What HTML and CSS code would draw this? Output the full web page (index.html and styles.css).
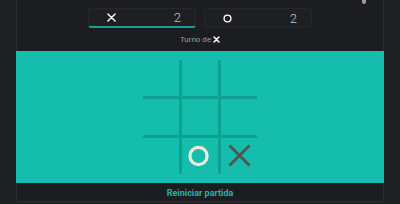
FILE: index.html
```html
<!DOCTYPE html>
<html lang="es">
<head>
    <meta charset="UTF-8">
    <meta name="viewport" content="width=device-width, initial-scale=1.0">
    <title>Tres en raya</title>
    <link rel="stylesheet" href="styles.css">
</head>
<body>
    <div class="game">
        <div class="scores">
            <div class="score active">
                <svg class="mark" width="9" height="9" viewBox="0 0 10 10"><path d="M1 1 L9 9 M9 1 L1 9" stroke="#fff" stroke-width="1.5" stroke-linecap="round"/></svg>
                <span class="points">2</span>
            </div>
            <div class="score">
                <svg class="mark" width="9" height="9" viewBox="0 0 10 10"><circle cx="5" cy="5" r="3.8" fill="none" stroke="#fff" stroke-width="1.5"/></svg>
                <span class="points">2</span>
            </div>
        </div>

        <p class="turn">Turno de <svg width="7" height="7" viewBox="0 0 10 10"><path d="M1.5 1.5 L8.5 8.5 M8.5 1.5 L1.5 8.5" stroke="#fff" stroke-width="2.2" stroke-linecap="round"/></svg></p>

        <div class="board">
            <div class="grid">
                <div class="cell"></div>
                <div class="cell"></div>
                <div class="cell"></div>
                <div class="cell"></div>
                <div class="cell"></div>
                <div class="cell"></div>
                <div class="cell"></div>
                <div class="cell">
                    <svg width="24" height="24" viewBox="0 0 24 24"><circle cx="10.5" cy="12" r="8.6" fill="none" stroke="#f2ebd3" stroke-width="3.2"/></svg>
                </div>
                <div class="cell">
                    <svg width="24" height="24" viewBox="0 0 24 24"><path d="M2.5 1.5 L22.5 21.5 M22.5 1.5 L2.5 21.5" stroke="#545454" stroke-width="3"/></svg>
                </div>
            </div>
        </div>

        <button class="restart">Reiniciar partida</button>
    </div>

    <div class="pointer"></div>
</body>
</html>
```

FILE: styles.css
```css
body {
    margin: 0;
    height: 204px;
    overflow: hidden;
    background: #202125;
    font-family: Roboto, "Liberation Sans", sans-serif;
    color: #c8c8c8;
}
.game {
    margin: 0 16px;
    height: 202px;
    background: #1c1d21;
    border-left: 1px solid #2b2c30;
    border-right: 1px solid #2b2c30;
    border-bottom: 1px solid #2b2c30;
    box-sizing: border-box;
    display: flex;
    flex-direction: column;
}
.scores {
    display: flex;
    justify-content: center;
    gap: 8px;
    padding-top: 8px;
    flex-shrink: 0;
}
.score {
    width: 108px;
    height: 20px;
    box-sizing: border-box;
    display: flex;
    align-items: center;
    justify-content: space-between;
    padding: 0 14px 0 18px;
    background: #1e1f23;
    border: 1px solid #26272b;
    border-radius: 3px;
}
.score.active {
    border-bottom: 2px solid #1c9f90;
}
.points {
    font-size: 13px;
    font-weight: 300;
    color: #c4c4c4;
}
.turn {
    margin: 0;
    height: 23px;
    flex-shrink: 0;
    display: flex;
    align-items: center;
    justify-content: center;
    gap: 2px;
    font-size: 8px;
    color: #9a9a9a;
}
.board {
    background: #14bdac;
    height: 132px;
    flex-shrink: 0;
    margin: 0 -1px;
    display: flex;
    justify-content: center;
    padding-top: 9px;
    box-sizing: border-box;
}
.grid {
    display: grid;
    grid-template-columns: repeat(3, 36px);
    grid-template-rows: repeat(3, 36px);
    gap: 3px;
    background: #0da192;
    height: 114px;
}
.cell {
    background: #14bdac;
    display: flex;
    align-items: center;
    justify-content: center;
}
.restart {
    background: none;
    border: none;
    font-family: Roboto, "Liberation Sans", sans-serif;
    font-size: 9px;
    font-weight: 700;
    color: #26b2a3;
    flex: 1;
    padding: 1px 0 0;
    cursor: pointer;
}
.pointer {
    position: absolute;
    top: 0;
    left: 362px;
    width: 4px;
    height: 4px;
    background: #9b9b9b;
    border-radius: 0 0 2px 2px;
}
```
